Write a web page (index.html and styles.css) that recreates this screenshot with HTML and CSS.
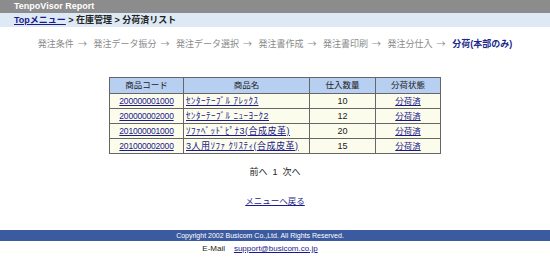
FILE: index.html
```html
<!DOCTYPE html>
<html lang="ja">
<head>
<meta charset="utf-8">
<title>分荷済リスト</title>
<link rel="stylesheet" href="styles.css">
</head>
<body>
<div class="topbar">TenpoVisor Report</div>
<div class="crumbs"><a href="#">Topメニュー</a> &gt; 在庫管理 &gt; 分荷済リスト</div>
<div class="steps">
  <span>発注条件</span><span class="arr">→</span>
  <span>発注データ振分</span><span class="arr">→</span>
  <span>発注データ選択</span><span class="arr">→</span>
  <span>発注書作成</span><span class="arr">→</span>
  <span>発注書印刷</span><span class="arr">→</span>
  <span>発注分仕入</span><span class="arr">→</span>
  <span class="cur">分荷(本部のみ)</span>
</div>
<table class="list">
  <thead>
    <tr><th class="c1">商品コード</th><th class="c2">商品名</th><th class="c3">仕入数量</th><th class="c4">分荷状態</th></tr>
  </thead>
  <tbody>
    <tr><td class="ctr num"><a href="#">200000001000</a></td><td class="name"><a href="#">ｾﾝﾀｰﾃｰﾌﾞﾙ ｱﾚｯｸｽ</a></td><td class="ctr qty">10</td><td class="ctr"><a href="#">分荷済</a></td></tr>
    <tr><td class="ctr num"><a href="#">200000002000</a></td><td class="name"><a href="#">ｾﾝﾀｰﾃｰﾌﾞﾙ ﾆｭｰﾖｰｸ2</a></td><td class="ctr qty">12</td><td class="ctr"><a href="#">分荷済</a></td></tr>
    <tr><td class="ctr num"><a href="#">201000001000</a></td><td class="name"><a href="#">ｿﾌｧﾍﾞｯﾄﾞﾋﾟﾅ3(合成皮革)</a></td><td class="ctr qty">20</td><td class="ctr"><a href="#">分荷済</a></td></tr>
    <tr><td class="ctr num"><a href="#">201000002000</a></td><td class="name"><a href="#">3人用ｿﾌｧ ｸﾘｽﾃｨ(合成皮革)</a></td><td class="ctr qty">15</td><td class="ctr"><a href="#">分荷済</a></td></tr>
  </tbody>
</table>
<div class="pager">前へ&nbsp;&nbsp;1&nbsp;&nbsp;次へ</div>
<div class="back"><a href="#">メニューへ戻る</a></div>
<div class="footer">Copyright 2002 Busicom Co.,Ltd. All Rights Reserved.</div>
<div class="mail">E-Mail&nbsp;&nbsp;&nbsp;&nbsp;<a href="#">support@busicom.co.jp</a></div>
</body>
</html>
```
FILE: styles.css
```css
html, body {
  margin: 0;
  padding: 0;
  background: #ffffff;
  font-family: "Liberation Sans", "Noto Sans CJK JP", sans-serif;
  font-size: 9px;
  color: #222;
}
a { color: #1a1a8c; }
.topbar {
  height: 13px;
  line-height: 13px;
  background: #8c8c8c;
  color: #fff;
  font-weight: bold;
  font-size: 9px;
  padding-left: 14px;
}
.crumbs {
  height: 14px;
  line-height: 14px;
  background: #dde9f5;
  font-weight: bold;
  font-size: 9px;
  padding-left: 14px;
  color: #222;
}
.crumbs a { color: #1a1a8c; }
.steps {
  margin-top: 10px;
  height: 14px;
  line-height: 14px;
  text-align: center;
  color: #8a8a8a;
  font-size: 9px;
}
.steps .arr {
  font-family: "Noto Sans CJK JP", sans-serif;
  margin: 0 4px;
}
.steps .cur { color: #1a2a8c; font-weight: bold; }
.list {
  margin: 26px auto 0;
  width: 332px;
  border-collapse: collapse;
  border: 1px solid #555;
  font-size: 8.5px;
}
.list th, .list td {
  border: 1px solid #666;
  padding: 0 2px;
  height: 14px;
  line-height: 13px;
}
.list th {
  background: #b7cff0;
  font-weight: normal;
  height: 15px;
}
.list td { background: #fcfcec; }
.list td.name { font-size: 9px; letter-spacing: 0.5px; }
.list td.num { font-size: 8.5px; letter-spacing: -0.2px; }
.list td.qty { font-size: 9px; }
.list .c1 { width: 69px; }
.list .c2 { width: 121px; }
.list .c3 { width: 61px; }
.list .ctr { text-align: center; }
.pager {
  margin-top: 11px;
  text-align: center;
  line-height: 14px;
  font-size: 9px;
}
.back {
  margin-top: 15px;
  text-align: center;
  line-height: 14px;
  font-size: 8.5px;
}
.footer {
  margin-top: 22px;
  height: 11px;
  line-height: 11px;
  background: #3b5aa0;
  color: #fff;
  text-align: center;
  font-size: 7px;
  padding-right: 30px;
}
.mail {
  margin-top: 1px;
  text-align: center;
  line-height: 14px;
  font-size: 8px;
  padding-right: 30px;
}
```
